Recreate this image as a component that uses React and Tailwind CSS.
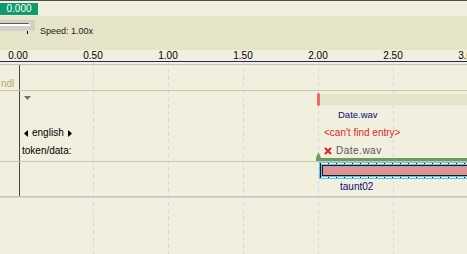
import React from 'react';

const TICKS = ['0.00', '0.50', '1.00', '1.50', '2.00', '2.50', '3.00'];
const GRID = [0.5, 1, 1.5, 2, 2.5];

function Arrow({ dir }) {
  return (
    <svg width="4" height="7" viewBox="0 0 4 7" className="shrink-0">
      {dir === 'left' ? <polygon points="4,0 4,7 0,3.5" fill="#000" /> : <polygon points="0,0 0,7 4,3.5" fill="#000" />}
    </svg>
  );
}

export default function App() {
  return (
    <div
      className="w-[467px] h-[254px] overflow-hidden bg-[#f1efdd] text-[10px] leading-[10px] text-black"
      style={{ fontFamily: '"Liberation Sans", Arial, sans-serif' }}
    >
      {/* time readout */}
      <div className="h-[16px] border-t border-[#4e4e4e] pt-[2px]">
        <div className="w-[38px] h-[12px] bg-[#0f9b6b] text-white text-center pt-[1px]">0.000</div>
      </div>

      {/* speed panel */}
      <div className="h-[34px] bg-[#e5e3c8] flex items-start gap-[5px] pt-[4px]">
        <div className="flex flex-col items-start">
          <div className="w-[35px] h-[11px] bg-[#d4d0c8] pt-[3px]">
            <div className="w-[30px] h-[3px] border-t border-[#5a5a5a] border-r-2 border-r-white bg-white" />
          </div>
          <div className="ml-[27px] w-px h-[3px] bg-black" />
        </div>
        <div className="mt-[7px] text-[9px] leading-[9px] text-[#222]">Speed: 1.00x</div>
      </div>

      {/* ruler */}
      <div className="h-[12px] border-b border-[#23236e] flex ml-[-19.5px] pt-px">
        {TICKS.map((t) => (
          <div key={t} className="w-[75px] shrink-0 text-center">{t}</div>
        ))}
      </div>

      {/* tracks */}
      <div className="relative">
        <div className="absolute inset-x-0 top-0 h-[200px] flex gap-[74px] pl-[93px]">
          {GRID.map((g) => (
            <div key={g} className="w-px h-full bg-[repeating-linear-gradient(180deg,#d6d6ef_0_4px,transparent_4px_7px)]" />
          ))}
        </div>

        <div className="relative h-[2px]" />

        <div className="relative">
          {/* time-zero line */}
          <div className="absolute left-[19px] top-0 bottom-0 w-px bg-[#444]" />

          <div className="relative h-[26px] border-t border-[#c9c5a6] pt-[14px] pl-px text-[#b3ab6a]">ndl</div>

          <div className="relative h-[71px] border-t border-[#c9c5a6] flex">
            <div className="w-[316px] shrink-0 flex flex-col items-start pl-[22px]">
              <svg width="7" height="4" viewBox="0 0 7 4" className="mt-[5px] ml-[2px]">
                <polygon points="0,0 7,0 3.5,4" fill="#707070" />
              </svg>
              <div className="mt-[28px] ml-[2px] flex items-center gap-[4px]">
                <Arrow dir="left" />
                <span>english</span>
                <Arrow dir="right" />
              </div>
              <div className="mt-[8px]">token/data:</div>
            </div>

            {/* clip starting at 2.00 */}
            <div className="flex-1 flex flex-col items-start">
              <div className="w-full flex items-center mt-[2px] pl-px">
                <div className="w-[3px] h-[13px] rounded-full bg-[#ef6a6a]" />
                <div className="flex-1 h-[11px] bg-[#e5e3c8]" />
              </div>
              <div className="mt-[4px] ml-[22px] text-[#0b0b80] text-[9.5px]">Date.wav</div>
              <div className="mt-[8px] ml-[8px] text-[#e0262a]">&lt;can't find entry&gt;</div>
              <div className="mt-[8px] ml-[8px] flex items-center gap-[4px] text-[#555]">
                <svg width="8" height="8" viewBox="0 0 8 8">
                  <path d="M1 1 L7 7 M7 1 L1 7" stroke="#dd2222" strokeWidth="2" />
                </svg>
                <span className="tracking-[0.5px]">Date.wav</span>
              </div>
              <svg width="5" height="6" viewBox="0 0 5 6" className="mt-[-4px]">
                <polygon points="2.5,0 5,6 0,6" fill="#6b9b62" />
              </svg>
              <div className="w-full h-[3px] bg-[#6b9b62]" />
            </div>
          </div>

          <div className="relative h-[35px] border-t border-[#c9c5a6] flex">
            <div className="w-[319px] shrink-0" />
            <div className="flex-1 flex flex-col items-start">
              <div className="w-[158px] h-[17px] border border-[#5bc6f2] p-px bg-[repeating-linear-gradient(90deg,#111_0_1px,#eaf8ff_1px_8px)]">
                <div className="h-full border border-[#5bc6f2]">
                  <div className="h-full border border-r-0 border-[#1a1a1a] bg-[#dc9494]" />
                </div>
              </div>
              <div className="mt-[3px] ml-[21px] text-[#0b0b80]">taunt02</div>
            </div>
          </div>
        </div>

        <div className="relative h-[2px] border-t border-[#c9c5a6] border-b border-b-[#d4d4f0]" />
      </div>
    </div>
  );
}
